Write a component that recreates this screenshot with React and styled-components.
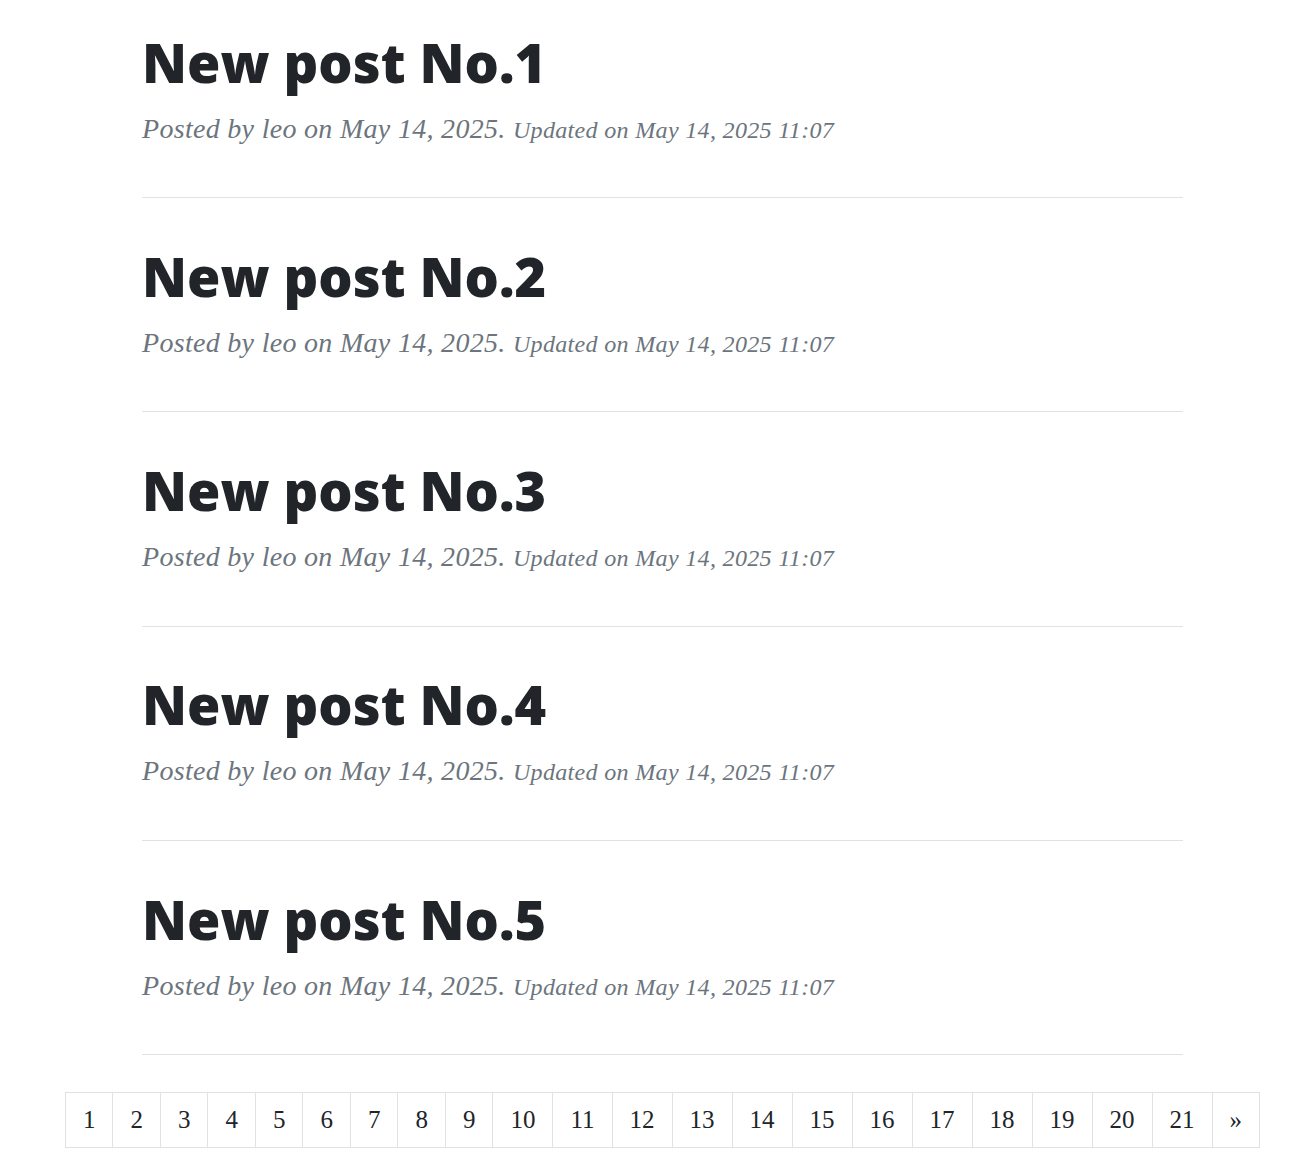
import React from "react";
import styled, { createGlobalStyle } from "styled-components";

const GlobalStyle = createGlobalStyle`
  body {
    margin: 0;
    background: #fff;
    font-family: "Liberation Serif", serif;
    color: #212529;
  }
`;

const Column = styled.main`
  width: 1041px;
  margin-left: 142px;
  padding-top: 29.5px;
  padding-bottom: 16px;
`;

const PostPreview = styled.article``;

const PostTitle = styled.h2`
  margin: 0;
  font-family: "Open Sans", sans-serif;
  font-weight: 800;
  font-size: 54px;
  line-height: 65px;
  color: #212529;
`;

const PostMeta = styled.p`
  margin: 13px 0 0;
  font-family: "Liberation Serif", serif;
  font-style: italic;
  font-size: 28px;
  line-height: 42px;
  letter-spacing: 0.3px;
  color: #6c757d;
`;

const Updated = styled.small`
  font-size: 0.86em;
  line-height: 1;
`;

const Divider = styled.hr`
  margin: 47.5px 0 45.8px;
  border: 0;
  border-top: 1px solid #dee2e6;
  ${(props) => props.last && "margin-bottom: 36.5px;"}
`;

const Pagination = styled.ul`
  display: flex;
  justify-content: center;
  list-style: none;
  margin: 0;
  padding: 0;
`;

const PageItem = styled.li`
  & + & {
    margin-left: -1px;
  }
`;

const PageLink = styled.a`
  display: block;
  padding: 8px 17px;
  font-family: "Liberation Serif", serif;
  font-size: 25px;
  line-height: 38px;
  color: #212529;
  background: #fff;
  border: 1px solid #dee2e6;
  text-decoration: none;
`;

const posts = [1, 2, 3, 4, 5];
const pages = Array.from({ length: 21 }, (_, i) => i + 1);

export default function App() {
  return (
    <>
      <GlobalStyle />
      <Column>
        {posts.map((n, i) => (
          <PostPreview key={n}>
            <PostTitle>New post No.{n}</PostTitle>
            <PostMeta>
              Posted by leo on May 14, 2025.{" "}
              <Updated>Updated on May 14, 2025 11:07</Updated>
            </PostMeta>
            <Divider last={i === posts.length - 1} />
          </PostPreview>
        ))}
        <Pagination>
          {pages.map((p) => (
            <PageItem key={p}>
              <PageLink href="#">{p}</PageLink>
            </PageItem>
          ))}
          <PageItem>
            <PageLink href="#">»</PageLink>
          </PageItem>
        </Pagination>
      </Column>
    </>
  );
}
